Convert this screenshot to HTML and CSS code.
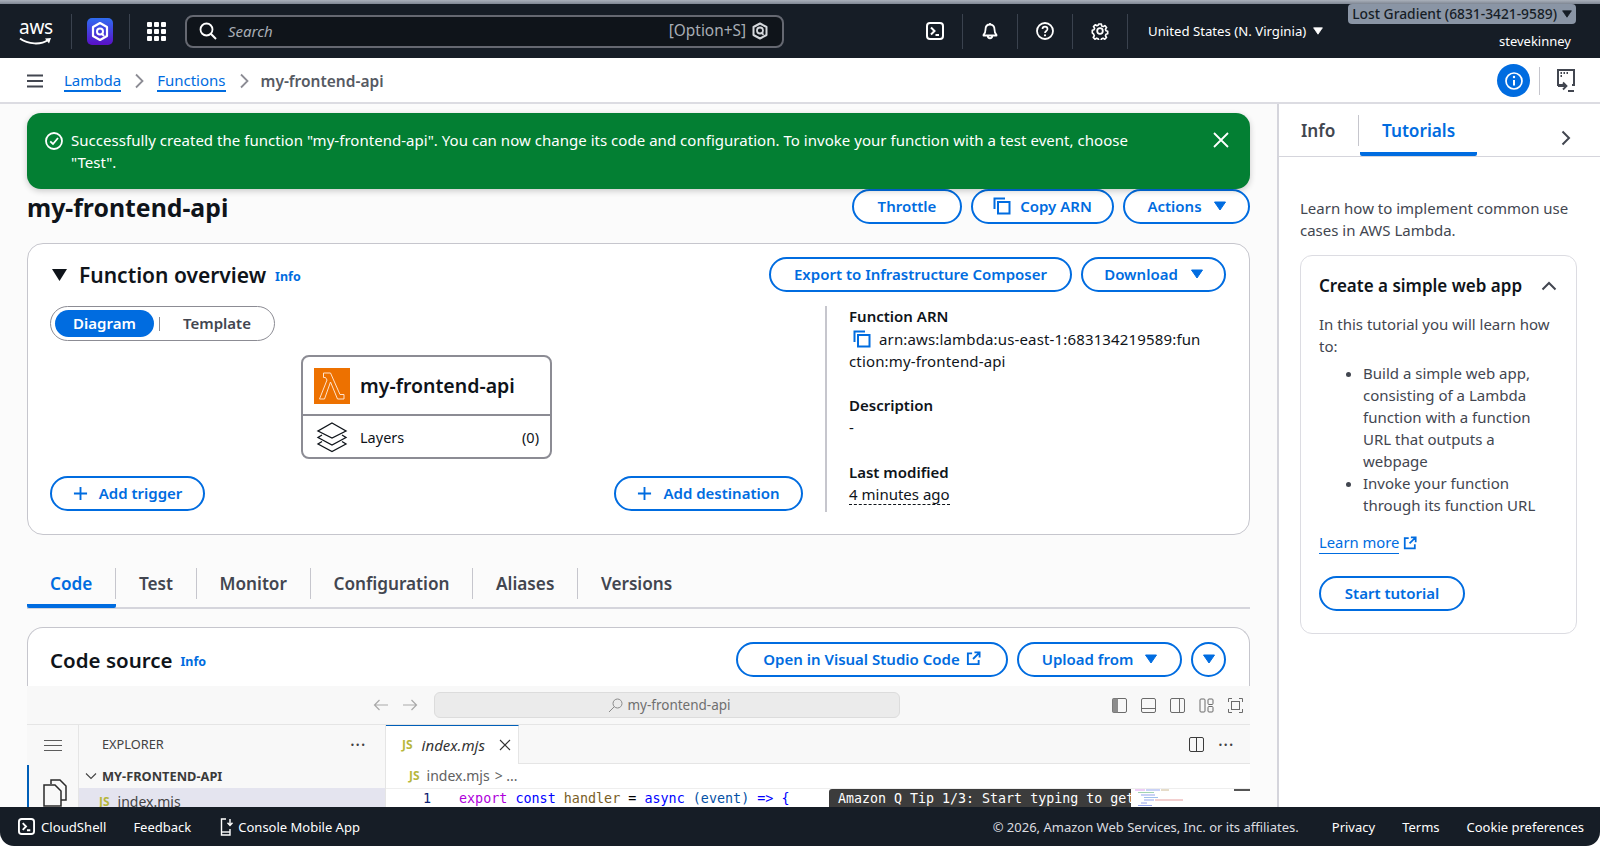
FILE: index.html
```html
<!DOCTYPE html>
<html lang="en">
<head>
<meta charset="utf-8">
<title>my-frontend-api | Functions | Lambda</title>
<link rel="stylesheet" href="styles.css">
</head>
<body>
<svg class="defs" width="0" height="0" aria-hidden="true">
  <symbol id="copy" viewBox="0 0 18 18"><path d="M1.500 12V1.500H12" fill="none" stroke="currentColor" stroke-width="2"/><rect x="5" y="5" width="11.500" height="11.500" fill="none" stroke="currentColor" stroke-width="2"/></symbol>
  <symbol id="caret" viewBox="0 0 12 10"><path d="M0.500 1h11L6 9z" fill="currentColor" stroke="currentColor" stroke-linejoin="round"/></symbol>
  <symbol id="plus" viewBox="0 0 16 16"><path d="M8 1v14M1 8h14" fill="none" stroke="currentColor" stroke-width="2"/></symbol>
  <symbol id="ext" viewBox="0 0 16 16"><path d="M6.500 2.500H2v11.500h11.500V9.500M9 1.500h5.500V7M14 2L7.500 8.500" fill="none" stroke="currentColor" stroke-width="2"/></symbol>
  <symbol id="term" viewBox="0 0 18 18"><rect x="1" y="1" width="16" height="16" rx="3" fill="none" stroke="currentColor" stroke-width="2"/><path d="M5 5.500 8.500 9 5 12.500M9.500 13H13" fill="none" stroke="currentColor" stroke-width="2"/></symbol>
  <symbol id="hexq" viewBox="0 0 16 18"><path d="M8 1.500 14.500 5v8L8 16.500 1.500 13V5z" fill="none" stroke="currentColor" stroke-width="2" stroke-linejoin="round"/><circle cx="8" cy="8.500" r="3" fill="none" stroke="currentColor" stroke-width="1.800"/><path d="M9.500 10.500 11.500 12.800" stroke="currentColor" stroke-width="1.800"/></symbol>
</svg>

<div class="strip"></div>

<header class="nav">
  <div class="logo">
    <span class="logo-text">aws</span>
    <svg class="logo-smile" width="34" height="9" viewBox="0 0 34 9"><path d="M1 1.500C9 7.500 22 8 29 3" fill="none" stroke="#fff" stroke-width="2"/><path d="M26 1.500 32 1 30 6.500" fill="#fff"/></svg>
  </div>
  <span class="nav-sep"></span>
  <svg class="q-icon" width="26" height="27" viewBox="0 0 26 27"><defs><linearGradient id="qg" x1="0" y1="0" x2="0" y2="1"><stop offset="0" stop-color="#2f6cf0"/><stop offset="1" stop-color="#5a0fc8"/></linearGradient></defs><rect width="26" height="27" rx="5" fill="url(#qg)"/><path d="M13 5 20 9v9l-7 4-7-4V9z" fill="none" stroke="#fff" stroke-width="2.200" stroke-linejoin="round"/><circle cx="13" cy="13.500" r="3" fill="none" stroke="#fff" stroke-width="2"/><path d="M14.500 15.500 17 18" stroke="#fff" stroke-width="2"/></svg>
  <span class="nav-sep nav-sep-b"></span>
  <svg class="grid-icon" width="19" height="19" viewBox="0 0 19 19" fill="#fff"><rect width="5" height="5" rx="1"/><rect x="7" width="5" height="5" rx="1"/><rect x="14" width="5" height="5" rx="1"/><rect y="7" width="5" height="5" rx="1"/><rect x="7" y="7" width="5" height="5" rx="1"/><rect x="14" y="7" width="5" height="5" rx="1"/><rect y="14" width="5" height="5" rx="1"/><rect x="7" y="14" width="5" height="5" rx="1"/><rect x="14" y="14" width="5" height="5" rx="1"/></svg>
  <div class="search">
    <svg width="18" height="18" viewBox="0 0 18 18"><circle cx="7.500" cy="7.500" r="6" fill="none" stroke="#fff" stroke-width="1.800"/><path d="M11.800 11.800 17 17" stroke="#fff" stroke-width="2"/></svg>
    <span class="search-ph">Search</span>
    <span class="search-key">[Option+S]</span>
    <svg class="search-hex" width="16" height="18"><use href="#hexq"/></svg>
  </div>
  <svg class="nav-ico nav-first" width="18" height="18"><use href="#term"/></svg>
  <span class="nav-sep"></span>
  <svg class="nav-ico" width="18" height="18" viewBox="0 0 18 18"><path d="M9 2.500c-3 0-4.500 2-4.500 5 0 3-.8 4.500-2 5.500v.5h13V13c-1.200-1-2-2.500-2-5.500 0-3-1.500-5-4.500-5zM9 1v1.500M6.800 14c0 3 4.400 3 4.400 0" fill="none" stroke="#fff" stroke-width="1.800" stroke-linejoin="round"/></svg>
  <span class="nav-sep"></span>
  <svg class="nav-ico" width="18" height="18" viewBox="0 0 18 18"><circle cx="9" cy="9" r="8" fill="none" stroke="#fff" stroke-width="1.800"/><path d="M6.500 7c0-3.300 5-3.300 5 0 0 2-2.500 2-2.500 4" fill="none" stroke="#fff" stroke-width="1.700"/><circle cx="9" cy="13.300" r="1.100" fill="#fff"/></svg>
  <span class="nav-sep"></span>
  <svg class="nav-ico" width="18" height="18" viewBox="0 0 18 18"><path d="M7.500 1h3l.4 2.300 1.700.8 2-1.200 2 2.200-1.300 1.900.6 1.800 2 .6v3l-2 .5-.6 1.800 1.200 2-2 2-2-1.200-1.700.7-.5 2.200h-3l-.5-2.200-1.700-.7-2 1.200-2-2 1.200-2-.7-1.800L0 11.400v-3l2-.6.7-1.800L1.400 4.100l2-2.200 2 1.200 1.700-.8z" transform="translate(1.300 1.100) scale(.86)" fill="none" stroke="#fff" stroke-width="1.900" stroke-linejoin="round"/><circle cx="9" cy="9" r="2.800" fill="none" stroke="#fff" stroke-width="1.800"/></svg>
  <span class="nav-sep"></span>
  <span class="region">United States (N. Virginia)</span>
  <svg class="region-caret" width="10" height="8"><use href="#caret"/></svg>
  <div class="account">
    <div class="account-badge">Lost Gradient (6831-3421-9589) <svg width="10" height="8"><use href="#caret"/></svg></div>
    <div class="account-user">stevekinney</div>
  </div>
</header>

<div class="crumbs">
  <svg class="burger" width="16" height="14" viewBox="0 0 16 14"><path d="M0 1.500h16M0 7h16M0 12.500h16" stroke="#424650" stroke-width="2"/></svg>
  <a class="crumb-link">Lambda</a>
  <svg class="crumb-chev" width="10" height="16" viewBox="0 0 10 16"><path d="M2 1.500 8.500 8 2 14.500" fill="none" stroke="#8c8c94" stroke-width="1.800"/></svg>
  <a class="crumb-link">Functions</a>
  <svg class="crumb-chev" width="10" height="16" viewBox="0 0 10 16"><path d="M2 1.500 8.500 8 2 14.500" fill="none" stroke="#8c8c94" stroke-width="1.800"/></svg>
  <span class="crumb-current">my-frontend-api</span>
  <span class="info-pill"><svg width="18" height="18" viewBox="0 0 18 18"><circle cx="9" cy="9" r="8" fill="none" stroke="#fff" stroke-width="1.700"/><path d="M9 8v5.500" stroke="#fff" stroke-width="2"/><circle cx="9" cy="5" r="1.200" fill="#fff"/></svg></span>
  <span class="crumb-sep"></span>
  <svg class="crumb-cs" width="18" height="24" viewBox="0 0 18 24"><path d="M8 16H1V1h16v15h-2" fill="none" stroke="#424650" stroke-width="2"/><path d="M3.500 4h1.500M6.500 4H8M9.500 4H11M3.500 7H5" stroke="#424650" stroke-width="1.800"/><path d="M1 17h8M6 13.500l3.500 3.500L6 20.500" fill="none" stroke="#424650" stroke-width="1.800"/><path d="M11 22h6" stroke="#424650" stroke-width="2"/></svg>
</div>

<main class="main">
  <div class="content">
    <div class="flash">
      <svg class="flash-ico" width="18" height="18" viewBox="0 0 18 18"><circle cx="9" cy="9" r="8" fill="none" stroke="#fff" stroke-width="1.800"/><path d="M5.200 9.300 8 12l5-6" fill="none" stroke="#fff" stroke-width="1.800"/></svg>
      <p class="flash-text">Successfully created the function "my-frontend-api". You can now change its code and configuration. To invoke your function with a test event, choose "Test".</p>
      <svg class="flash-close" width="16" height="16" viewBox="0 0 16 16"><path d="M1 1l14 14M15 1 1 15" stroke="#fff" stroke-width="1.800"/></svg>
    </div>

    <div class="page-head">
      <h1 class="page-title">my-frontend-api</h1>
      <div class="btn-row">
        <button class="btn btn-throttle">Throttle</button>
        <button class="btn btn-copy"><svg width="18" height="18"><use href="#copy"/></svg>Copy ARN</button>
        <button class="btn btn-actions">Actions<svg width="12" height="10"><use href="#caret"/></svg></button>
      </div>
    </div>

    <section class="card overview">
      <div class="overview-head">
        <svg class="tri" width="15" height="12" viewBox="0 0 15 12"><path d="M0 0h15L7.500 12z" fill="#0f141a"/></svg>
        <h2 class="card-title">Function overview</h2>
        <a class="info-link">Info</a>
        <div class="btn-row push">
          <button class="btn btn-export">Export to Infrastructure Composer</button>
          <button class="btn btn-download">Download<svg width="12" height="10"><use href="#caret"/></svg></button>
        </div>
      </div>
      <div class="overview-body">
        <div class="diagram">
          <div class="seg">
            <span class="seg-on">Diagram</span>
            <span class="seg-bar"></span>
            <span class="seg-off">Template</span>
          </div>
          <div class="node">
            <div class="node-top">
              <svg class="lambda" width="36" height="36" viewBox="0 0 36 36"><rect width="36" height="36" fill="#ed7100"/><path d="M9.500 5h7l9.500 21.500h4V31h-6.500L16.500 14 10.500 31H5.500L13 12l-1.500-2.500h-2z" fill="none" stroke="#ffe3cc" stroke-width="1"/></svg>
              <span class="node-name">my-frontend-api</span>
            </div>
            <div class="node-bottom">
              <svg class="layers" width="32" height="32" viewBox="0 0 32 32"><g fill="none" stroke="#0f141a" stroke-width="1.300"><path d="M16 2 30 10 16 17 2 10z"/><path d="M6 14 2 16.500 16 24l14-7.500L26 14"/><path d="M6 20.500 2 23l14 7.500L30 23l-4-2.500"/></g></svg>
              <span class="layers-label">Layers</span>
              <span class="layers-count">(0)</span>
            </div>
          </div>
          <div class="node-actions">
            <button class="btn btn-trigger"><svg width="15" height="15"><use href="#plus"/></svg>Add trigger</button>
            <button class="btn btn-dest"><svg width="15" height="15"><use href="#plus"/></svg>Add destination</button>
          </div>
        </div>
        <div class="details">
          <div class="d-label">Function ARN</div>
          <div class="d-value d-arn"><svg class="arn-copy" width="18" height="18"><use href="#copy"/></svg>arn:aws:lambda:us-east-1:683134219589:fun<br>ction:my-frontend-api</div>
          <div class="d-label d-gap-first">Description</div>
          <div class="d-value">-</div>
          <div class="d-label d-gap">Last modified</div>
          <div class="d-value"><span class="dashed">4 minutes ago</span></div>
        </div>
      </div>
    </section>

    <nav class="tabs">
      <div class="tab tab-on"><span>Code</span></div>
      <div class="tab"><span>Test</span></div>
      <div class="tab"><span>Monitor</span></div>
      <div class="tab"><span>Configuration</span></div>
      <div class="tab"><span>Aliases</span></div>
      <div class="tab tab-last"><span>Versions</span></div>
    </nav>

    <section class="card code-card">
      <div class="code-head">
        <h2 class="card-title code-title">Code source</h2>
        <a class="info-link">Info</a>
        <div class="btn-row push">
          <button class="btn btn-vscode">Open in Visual Studio Code<svg width="15" height="15"><use href="#ext"/></svg></button>
          <button class="btn btn-upload">Upload from<svg width="12" height="10"><use href="#caret"/></svg></button>
          <button class="btn btn-circle"><svg width="12" height="10"><use href="#caret"/></svg></button>
        </div>
      </div>
    </section>

    <div class="ide">
      <div class="ide-top">
        <svg class="ide-arrow" width="16" height="12" viewBox="0 0 16 12"><path d="M15 6H1.500M6.500 1l-5 5 5 5" fill="none" stroke="#a9a9a9" stroke-width="1.200"/></svg>
        <svg class="ide-arrow ide-arrow-r" width="16" height="12" viewBox="0 0 16 12"><path d="M1 6h13.500M9.500 1l5 5-5 5" fill="none" stroke="#a9a9a9" stroke-width="1.200"/></svg>
        <div class="ide-search">
          <svg width="15" height="15" viewBox="0 0 15 15"><circle cx="9.500" cy="5.500" r="4.500" fill="none" stroke="#8a8a8a"/><path d="M6.300 8.700 1 14" stroke="#8a8a8a"/></svg>
          <span>my-frontend-api</span>
        </div>
        <div class="ide-layout">
          <svg width="15" height="15" viewBox="0 0 15 15"><rect x=".5" y=".5" width="14" height="14" rx="1.500" fill="none" stroke="#6b6b6b"/><rect x=".5" y=".5" width="5.500" height="14" fill="#8c8c8c"/></svg>
          <svg width="15" height="15" viewBox="0 0 15 15"><rect x=".5" y=".5" width="14" height="14" rx="1.500" fill="none" stroke="#6b6b6b"/><path d="M.5 10.500h14" stroke="#6b6b6b"/></svg>
          <svg width="15" height="15" viewBox="0 0 15 15"><rect x=".5" y=".5" width="14" height="14" rx="1.500" fill="none" stroke="#6b6b6b"/><path d="M9.500.5v14" stroke="#6b6b6b"/></svg>
          <svg width="15" height="15" viewBox="0 0 15 15" fill="none" stroke="#6b6b6b"><rect x="1" y="1" width="5" height="13" rx="1"/><rect x="9" y="1" width="5" height="5.500" rx="1"/><rect x="9" y="8.500" width="5" height="5.500" rx="1"/></svg>
          <svg width="15" height="15" viewBox="0 0 15 15" fill="none" stroke="#6b6b6b"><path d="M.5 4V.5H4M11 .5h3.500V4M14.500 11v3.500H11M4 14.500H.5V11"/><rect x="3.500" y="3.500" width="8" height="8"/></svg>
        </div>
      </div>
      <div class="ide-main">
        <div class="activity">
          <svg class="act-burger" width="18" height="11" viewBox="0 0 18 11"><path d="M0 .5h18M0 5.500h18M0 10.500h18" stroke="#5c5c5c"/></svg>
          <div class="act-files">
            <svg width="24" height="28" viewBox="0 0 24 28" fill="none" stroke="#2a2a2a" stroke-width="1.500"><path d="M8 5V1h9l6 6v14h-5"/><path d="M1 6h11l6 6v15H1z" fill="#f8f8f8"/></svg>
          </div>
        </div>
        <div class="explorer">
          <div class="exp-head"><span>EXPLORER</span><span class="dots">&#183;&#183;&#183;</span></div>
          <div class="exp-section">
            <svg width="12" height="8" viewBox="0 0 12 8"><path d="M1 1.500 6 6.500l5-5" fill="none" stroke="#424242" stroke-width="1.100"/></svg>
            <span>MY-FRONTEND-API</span>
          </div>
          <div class="exp-file"><span class="js">JS</span><span>index.mjs</span></div>
        </div>
        <div class="editor">
          <div class="ed-tabs">
            <div class="ed-tab">
              <span class="js">JS</span>
              <span class="ed-tab-name">index.mjs</span>
              <svg width="12" height="12" viewBox="0 0 12 12"><path d="M1 1l10 10M11 1 1 11" stroke="#333" stroke-width="1.100"/></svg>
            </div>
            <div class="ed-actions">
              <svg width="15" height="15" viewBox="0 0 15 15" fill="none" stroke="#3c3c3c"><rect x=".5" y=".5" width="14" height="14" rx="1.500"/><path d="M7.500.5v14"/></svg>
              <span class="dots">&#183;&#183;&#183;</span>
            </div>
          </div>
          <div class="ed-crumb"><span class="js">JS</span><span>index.mjs</span><span class="ed-crumb-rest">&gt; ...</span></div>
          <div class="ed-line">
            <span class="ln">1</span>
            <code class="code"><span class="k-m">export</span> <span class="k-b">const</span> <span class="k-f">handler</span> = <span class="k-b">async</span> <span class="k-p">(event)</span> <span class="k-b">=&gt;</span> <span class="k-b">{</span></code>
            <div class="tip">Amazon Q Tip 1/3: Start typing to get</div>
            <svg class="minimap" width="60" height="19" viewBox="0 0 60 19"><rect width="60" height="19" fill="#fff"/><g stroke-width=".8"><path d="M4 1h10" stroke="#d080e8"/><path d="M15 1h14" stroke="#7a8ee8"/><path d="M30 1h8" stroke="#c0a878"/><path d="M7 3.500h16" stroke="#8cc8a0"/><path d="M10 6h14" stroke="#7a8ee8"/><path d="M13 8.500h14" stroke="#88b0e8"/><path d="M13 11h10" stroke="#7a8ee8"/><path d="M24 11h28" stroke="#e08888"/><path d="M10 14h6" stroke="#7a8ee8"/><path d="M7 16.500h14" stroke="#7a8ee8"/></g></svg>
            <span class="ruler"></span>
          </div>
        </div>
      </div>
    </div>
  </div>

  <aside class="side">
    <div class="side-tabs">
      <span class="side-tab side-tab-info">Info</span>
      <span class="side-sep"></span>
      <span class="side-tab side-tab-on">Tutorials</span>
      <svg class="side-chev" width="10" height="16" viewBox="0 0 10 16"><path d="M1.500 1.500 8 8l-6.500 6.500" fill="none" stroke="#424650" stroke-width="2"/></svg>
    </div>
    <div class="side-body">
      <p class="side-intro">Learn how to implement common use cases in AWS Lambda.</p>
      <div class="tut">
        <div class="tut-head"><span>Create a simple web app</span>
          <svg width="16" height="10" viewBox="0 0 16 10"><path d="M1.500 8.500 8 2l6.500 6.500" fill="none" stroke="#424650" stroke-width="2"/></svg>
        </div>
        <p class="tut-text">In this tutorial you will learn how to:</p>
        <ul class="tut-list">
          <li>Build a simple web app, consisting of a Lambda function with a function URL that outputs a webpage</li>
          <li>Invoke your function through its function URL</li>
        </ul>
        <div class="tut-learn"><a class="tut-link">Learn more</a><svg width="14" height="14"><use href="#ext"/></svg></div>
        <button class="btn btn-start">Start tutorial</button>
      </div>
    </div>
  </aside>
</main>

<footer class="foot">
  <svg class="foot-ico" width="17" height="17"><use href="#term"/></svg>
  <span class="foot-cs">CloudShell</span>
  <span class="foot-fb">Feedback</span>
  <svg class="foot-phone" width="14" height="18" viewBox="0 0 14 18" fill="none" stroke="#fff" stroke-width="1.400"><path d="M6 1H1.500v16H10v-6"/><path d="M1.500 14H10"/><path d="M10 1v6M7.500 4.800 10 7.500l2.500-2.700"/></svg>
  <span class="foot-app">Console Mobile App</span>
  <span class="foot-copy">&#169; 2026, Amazon Web Services, Inc. or its affiliates.</span>
  <span class="foot-link foot-privacy">Privacy</span>
  <span class="foot-link">Terms</span>
  <span class="foot-link">Cookie preferences</span>
</footer>
</body>
</html>
```

FILE: styles.css
```css
* { box-sizing: border-box; }
html, body { margin: 0; padding: 0; }
body {
  width: 1600px;
  height: 846px;
  overflow: hidden;
  display: flex;
  flex-direction: column;
  background: #fff;
  color: #0f141a;
  font-family: "Noto Sans", sans-serif;
  font-size: 15px;
  line-height: 22px;
}
h1, h2, p, ul { margin: 0; padding: 0; }
.defs { position: absolute; }
svg { display: block; flex: none; }

.strip { height: 4px; flex: none; background: linear-gradient(#aab1bb, #7f8793); }

.nav {
  height: 54px;
  flex: none;
  display: flex;
  align-items: center;
  padding: 0 24px 0 19px;
  background: #161d26;
  color: #fff;
}
.logo { width: 34px; height: 28px; display: flex; flex-direction: column; align-items: center; }
.logo-text { font-size: 19px; line-height: 20px; font-weight: 400; letter-spacing: -.3px; }
.nav-sep { width: 1px; height: 35px; background: #3a424e; margin: 0 18px; flex: none; }
.q-icon { margin-left: -3px; }
.nav-sep-b { margin-left: 16px; margin-right: 17px; }
.search {
  width: 599px;
  height: 33px;
  margin-left: 19px;
  display: flex;
  align-items: center;
  padding: 0 14px 0 12px;
  background: #0f141a;
  border: 2px solid #656871;
  border-radius: 8px;
}
.search-ph { margin-left: 11px; font-style: italic; font-size: 15px; color: #a8adb5; }
.search-key { margin-left: auto; font-size: 15.400px; color: #a8adb5; }
.search-hex { margin-left: 6px; color: #d5d8dc; }
.nav-ico { color: #fff; }
.nav-first { margin-left: 142px; }
.region { margin-left: 2px; font-size: 13.200px; }
.region-caret { margin-left: 7px; color: #fff; }
.account { margin-left: auto; align-self: flex-start; display: flex; flex-direction: column; align-items: flex-end; }
.account-badge {
  display: flex;
  align-items: center;
  gap: 5px;
  height: 20px;
  padding: 0 4px;
  background: #8a95a5;
  border-radius: 4px;
  color: #161d26;
  font-size: 13.800px;
  font-weight: 500;
  white-space: nowrap;
}
.account-user { font-size: 13px; line-height: 18px; margin-top: 8px; padding-right: 5px; }

.crumbs {
  height: 46px;
  flex: none;
  display: flex;
  align-items: center;
  padding: 1px 25px 0 27px;
  background: #fff;
  border-bottom: 2px solid #dcdce2;
}
.crumb-link { color: #006ce0; font-size: 15px; border-bottom: 2px solid #006ce0; line-height: 20px; }
.burger { margin-right: 21px; }
.crumb-chev { margin: 0 13px; }
.crumb-current { color: #565a63; font-size: 15.500px; font-weight: 600; margin-left: -1px; }
.info-pill {
  margin-left: auto;
  width: 33px;
  height: 33px;
  border-radius: 50%;
  background: #006ce0;
  display: flex;
  align-items: center;
  justify-content: center;
}
.crumb-sep { width: 1px; height: 28px; background: #c6c6cd; margin: 0 17px 0 9px; }

.main { flex: 1; min-height: 0; display: flex; overflow: hidden; background: #fbfbfb; }
.content { width: 1277px; flex: none; padding: 85px 27px 0 27px; position: relative; overflow: hidden; }

.flash {
  position: absolute;
  left: 27px;
  top: 9px;
  width: 1223px;
  height: 76px;
  padding: 16px 21px 0 18px;
  background: #037f33;
  border-radius: 14px;
  box-shadow: 0 2px 6px rgba(0, 0, 0, .2);
  display: flex;
  align-items: flex-start;
  color: #fff;
  z-index: 2;
}
.flash-ico { margin: 3px 8px 0 0; }
.flash-text { width: 1090px; letter-spacing: .03px; }
.flash-close { margin: 3px 0 0 auto; }

.page-head { height: 35px; display: flex; align-items: center; justify-content: space-between; }
.page-title { font-size: 24.800px; line-height: 34px; font-weight: 700; }
.btn-row { display: flex; gap: 9px; }
.push { margin-left: auto; }
.btn {
  height: 35px;
  display: flex;
  align-items: center;
  justify-content: center;
  gap: 8px;
  padding: 0 22px 1px;
  background: #fff;
  border: 2px solid #006ce0;
  border-radius: 18px;
  color: #006ce0;
  font-family: inherit;
  font-size: 15px;
  font-weight: 600;
  white-space: nowrap;
}
.btn-throttle { width: 110px; }
.btn-copy { width: 143px; gap: 9px; }
.btn-actions { width: 127px; gap: 12px; }
.btn-export { width: 303px; }
.btn-download { width: 145px; gap: 13px; }
.btn-trigger { width: 155px; gap: 11px; }
.btn-dest { width: 189px; gap: 11px; }
.btn-vscode { width: 272px; gap: 6px; }
.btn-upload { width: 165px; gap: 12px; }
.btn-circle { width: 35px; padding: 0; border-radius: 50%; }
.btn-start { width: 146px; }

.card { background: #fff; border: 1px solid #c6c6cd; border-radius: 16px; }
.overview { margin-top: 19px; height: 292px; }
.overview-head { display: flex; align-items: center; height: 48px; margin-top: 13px; padding: 0 23px 13px 24px; }
.tri { margin-right: 12px; }
.card-title { font-size: 21px; line-height: 28px; font-weight: 600; }
.code-title { font-size: 20.500px; padding-top: 1px; }
.info-link { margin-left: 9px; margin-top: 4px; color: #006ce0; font-size: 12.500px; font-weight: 700; }
.code-head .info-link { margin-left: 8px; margin-top: 6px; }
.overview-body { display: flex; margin-top: 1px; }
.diagram { width: 799px; height: 206px; padding: 0 22px 0 22px; border-right: 2px solid #c6c6cd; }
.seg {
  width: 225px;
  height: 35px;
  display: flex;
  align-items: center;
  padding: 0 3px 0 4px;
  border: 1px solid #8c8c94;
  border-radius: 18px;
  background: #fff;
  font-weight: 600;
}
.seg-on { width: 99px; height: 27px; line-height: 26px; text-align: center; border-radius: 14px; background: #006ce0; color: #fff; }
.seg-bar { width: 1px; height: 14px; margin-left: 5px; background: #8c8c94; }
.seg-off { margin-left: 23px; margin-bottom: 1px; color: #424650; }
.node {
  width: 251px;
  height: 104px;
  margin: 14px 0 0 251px;
  border: 2px solid #8c8c94;
  border-radius: 8px;
  background: #fff;
}
.node-top { height: 59px; padding-left: 11px; display: flex; align-items: center; border-bottom: 2px solid #8c8c94; }
.node-name { margin-left: 10px; font-size: 19.500px; font-weight: 600; }
.node-bottom { height: 41px; display: flex; align-items: center; padding: 0 11px 0 13px; }
.layers { width: 32px; height: 32px; }
.layers-label { margin-left: 12px; font-size: 14.500px; }
.layers-count { margin-left: auto; font-size: 14.500px; }
.node-actions { margin-top: 17px; display: flex; justify-content: space-between; }
.details { margin-top: -1px; padding: 0 0 0 22px; }
.d-label { font-weight: 600; }
.d-gap-first { margin-top: 22px; }
.d-gap { margin-top: 23px; }
.d-arn { margin-top: 1px; letter-spacing: .15px; }
.arn-copy { display: inline-block; color: #006ce0; margin: 0 8px -3px 4px; }
.dashed { border-bottom: 1px dashed #0f141a; }

.tabs { display: flex; height: 45px; margin-top: 29px; border-bottom: 2px solid #d5d5dc; }
.tab { height: 44px; padding-top: 4px; border-bottom: 4px solid transparent; font-size: 17.200px; font-weight: 600; color: #424650; }
.tab span { display: block; padding: 0 22.750px; line-height: 31px; border-right: 1px solid #c6c6cd; }
.tab-on span { padding-left: 23px; }
.tab-last span { border-right: 0; }
.tab-on { color: #006ce0; border-bottom-color: #006ce0; border-radius: 0 0 2px 2px; }
.code-card { margin-top: 18px; height: 80px; border-bottom: 0; border-radius: 16px 16px 0 0; }
.code-head { display: flex; align-items: center; height: 59px; padding: 3px 23px 0 22px; }

.ide { height: 121px; margin-top: -21px; position: relative; background: #f8f8f8; overflow: hidden; }
.ide-top { height: 39px; display: flex; align-items: center; padding: 0 7px 0 346px; border-bottom: 1px solid #e5e5e5; }
.ide-arrow { margin-right: 13px; }
.ide-arrow-r { margin-right: 16px; }
.ide-search {
  width: 466px;
  height: 26px;
  display: flex;
  align-items: center;
  justify-content: center;
  gap: 4px;
  padding-left: 5px;
  background: #ebebeb;
  border: 1px solid #dcdcdc;
  border-radius: 6px;
  font-size: 13.500px;
  color: #6f6f6f;
}
.ide-layout { margin-left: auto; display: flex; gap: 14px; }
.ide-main { display: flex; height: 82px; }
.activity { width: 52px; flex: none; border-right: 1px solid #e5e5e5; }
.act-burger { margin: 15px 0 0 17px; }
.act-files { margin-top: 14px; height: 43px; border-left: 2px solid #005fb8; padding: 14px 0 0 14px; }
.explorer { width: 307px; flex: none; border-right: 1px solid #e5e5e5; }
.exp-head { height: 39px; display: flex; align-items: center; justify-content: space-between; padding: 0 19px 2px 23px; font-size: 12.800px; color: #424242; }
.dots { font-size: 18px; letter-spacing: .5px; color: #424242; }
.exp-section { height: 24px; display: flex; align-items: center; gap: 5px; padding: 0 0 0 6px; font-size: 12.800px; font-weight: 700; color: #3a3a3a; }
.exp-file { height: 24px; display: flex; align-items: center; gap: 8px; padding: 3px 0 0 20px; background: #e4e4ef; font-size: 14px; color: #424242; }
.js { color: #b7b73b; font-size: 12px; font-weight: 700; }
.editor { flex: 1; min-width: 0; background: #fff; }
.ed-tabs { height: 39px; display: flex; background: #f8f8f8; border-bottom: 1px solid #e5e5e5; }
.ed-tab {
  width: 133px;
  height: 39px;
  display: flex;
  align-items: center;
  padding-left: 16px;
  background: #fff;
  border-top: 1px solid #005fb8;
  border-right: 1px solid #e5e5e5;
}
.ed-tab-name { margin: 0 14px 0 9px; font-style: italic; font-size: 15px; color: #333; }
.ed-actions { margin-left: auto; display: flex; align-items: center; gap: 14px; padding-right: 16px; }
.ed-crumb { height: 24px; display: flex; align-items: center; gap: 7px; padding: 0 0 0 23px; font-size: 14px; color: #616161; }
.ed-crumb-rest { margin-left: -2px; }
.ed-line { position: relative; height: 19px; padding-left: 37px; display: flex; border-top: 1px solid #eee; font-family: "DejaVu Sans Mono", monospace; font-size: 13.400px; line-height: 19px; white-space: pre; }
.ln { width: 36px; color: #0b216f; flex: none; }
.code { font: inherit; color: #000; }
.k-m { color: #af00db; }
.k-b { color: #0000ff; }
.k-f { color: #795e26; }
.k-p { color: #0451a5; }
.tip {
  position: absolute;
  left: 443px;
  top: 0;
  width: 302px;
  height: 19px;
  padding-left: 9px;
  background: #3c3c3c;
  color: #fff;
  font-size: 13.300px;
  border-radius: 3px 0 0 0;
}
.minimap { position: absolute; left: 745px; top: 0; }
.ruler { position: absolute; right: 0; top: 0; width: 16px; height: 2px; background: #555; }

.side { flex: 1; min-width: 0; background: #fff; border-left: 2px solid #d5d5dc; }
.side-tabs { height: 53px; display: flex; position: relative; border-bottom: 1px solid #d5d5dc; }
.side-tab { height: 48px; padding: 16px 0 0 22px; font-size: 17.200px; font-weight: 600; color: #424650; }
.side-tab-info { width: 79px; }
.side-sep { width: 1px; height: 31px; margin-top: 11px; background: #c6c6cd; }
.side-tab-on { width: 117px; margin-left: 1px; color: #006ce0; border-bottom: 4px solid #006ce0; border-radius: 0 0 2px 2px; height: 52px; }
.side-chev { position: absolute; right: 29px; top: 26px; }
.side-body { padding: 40px 23px 0 21px; }
.side-intro { color: #424650; }
.tut { height: 379px; margin-top: 14px; padding: 18px 18px; border: 1px solid #dcdce2; border-radius: 12px; }
.tut-head { display: flex; align-items: center; justify-content: space-between; font-size: 17px; font-weight: 600; line-height: 24px; padding-right: 1px; }
.tut-text { margin-top: 15px; color: #424650; }
.tut-list { margin: 5px 0 0; padding-left: 44px; color: #424650; }
.tut-learn { margin-top: 16px; display: flex; align-items: center; gap: 4px; color: #006ce0; }
.tut-link { border-bottom: 1px solid #006ce0; line-height: 21px; font-size: 14.800px; }
.btn-start { margin-top: 22px; }

.foot {
  height: 39px;
  flex: none;
  display: flex;
  align-items: center;
  padding: 0 16px 0 18px;
  background: #161d26;
  border-radius: 0 0 14px 14px;
  color: #fff;
  font-size: 13px;
}
.foot-ico { color: #fff; }
.foot-cs { margin-left: 6px; font-size: 13.150px; }
.foot-fb { margin-left: 27px; }
.foot-phone { margin-left: 29px; }
.foot-app { margin-left: 4px; }
.foot-copy { margin-left: auto; color: #dcdde0; }
.foot-link { margin-left: 27px; }
.foot-privacy { margin-left: 33px; }
```
